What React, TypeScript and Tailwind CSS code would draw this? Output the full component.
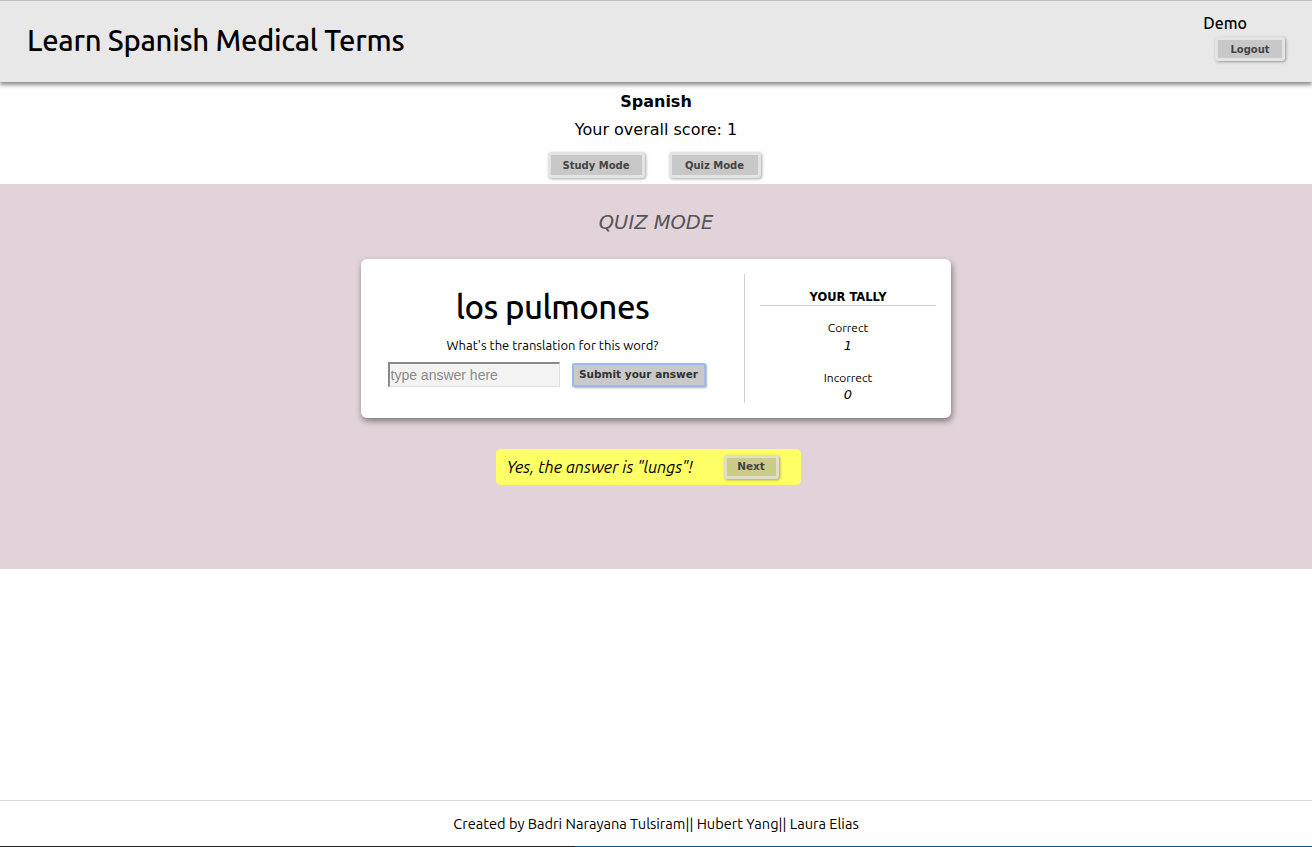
import React, { useState } from 'react';

const ubuntu = "font-['Ubuntu','Noto_Sans','Open_Sans',sans-serif]";
const verdana = "font-['DejaVu_Sans','Verdana',sans-serif]";

function GreyButton({ label, className = '' }: { label: string; className?: string }) {
  return (
    <button
      className={`${verdana} whitespace-nowrap rounded-[3px] border-[3px] border-[#e4e4e4] bg-[#c8c8c8] text-[10px] font-bold text-[#444] shadow-[1px_1px_3px_rgba(0,0,0,0.35)] ${className}`}
    >
      {label}
    </button>
  );
}

export default function App() {
  const [answer, setAnswer] = useState('');

  return (
    <div className="flex min-h-[847px] flex-col bg-white">
      <header className="flex h-[82px] items-start justify-between border-t border-[#bdbdbd] bg-[#e8e8e8] px-[27px] shadow-[0_3px_4px_rgba(0,0,0,0.45)]">
        <h1 className={`${ubuntu} mt-[22px] text-[29.3px] font-medium leading-[36px] tracking-[-0.3px] text-black`}>
          Learn Spanish Medical Terms
        </h1>
        <div className="flex flex-col items-end pt-[12px]">
          <span className={`${ubuntu} mr-[38px] text-[16px] font-medium leading-[20px] text-black`}>Demo</span>
          <GreyButton label="Logout" className="mt-[4px] h-[24px] w-[70px]" />
        </div>
      </header>

      <section className={`${verdana} flex flex-col items-center pt-[10px]`}>
        <h2 className="text-[16px] font-bold leading-[20px] text-black">Spanish</h2>
        <p className="mt-[8px] text-[16px] leading-[20px] text-black">Your overall score: 1</p>
        <div className="-ml-[4px] mt-[12px] flex gap-[24px]">
          <GreyButton label="Study Mode" className="h-[26px] w-[97px]" />
          <GreyButton label="Quiz Mode" className="h-[26px] w-[92px]" />
        </div>
      </section>

      <main className="mt-[6px] flex h-[385px] flex-col items-center bg-[#e1d3d9]">
        <h3 className={`${verdana} mt-[27px] text-[19.5px] italic leading-[24px] text-[#555]`}>QUIZ MODE</h3>

        <div className="mt-[24px] flex h-[159px] w-[590px] rounded-[6px] bg-white py-[15px] shadow-[1px_3px_6px_rgba(0,0,0,0.45)]">
          <div className="flex w-[384px] flex-col items-center border-r border-[#cfcfcf]">
            <div className={`${ubuntu} mt-[13px] text-[33px] font-medium leading-[40px] tracking-[-0.5px] text-black`}>
              los pulmones
            </div>
            <div className={`${ubuntu} mt-[10px] text-[13px] leading-[16px] text-black`}>
              What's the translation for this word?
            </div>
            <div className="mr-[12px] mt-[9px] flex items-center gap-[12px]">
              <input
                value={answer}
                onChange={e => setAnswer(e.target.value)}
                placeholder="type answer here"
                className="h-[25px] w-[172px] border-t-2 border-l-2 border-t-[#8a8a8a] border-l-[#8a8a8a] border-b border-r border-[#e0e0e0] bg-[#f3f3f3] px-[1px] font-['Liberation_Sans',Arial,sans-serif] text-[14px] text-black outline-none placeholder:text-[#8a8a8a]"
              />
              <button
                className={`${verdana} h-[24px] w-[134px] whitespace-nowrap rounded-[2px] border-[2px] border-[#9cb8f0] bg-[#c9c9c9] text-[10.5px] font-bold text-[#333] shadow-[1px_1px_2px_rgba(0,0,0,0.3)]`}
              >
                Submit your answer
              </button>
            </div>
          </div>
          <div className="flex flex-1 flex-col items-center px-[15px] pt-[16px]">
            <div className={`${verdana} w-full border-b border-[#cfcfcf] pb-[1px] text-center text-[11.5px] font-bold leading-[14px] text-black`}>
              YOUR TALLY
            </div>
            <div className={`${ubuntu} mt-[14px] text-[12px] leading-[15px] text-black`}>Correct</div>
            <div className={`${verdana} mt-[3px] text-[13px] italic leading-[16px] text-black`}>1</div>
            <div className={`${ubuntu} mt-[16px] text-[12px] leading-[15px] text-black`}>Incorrect</div>
            <div className={`${verdana} mt-[2px] text-[13px] italic leading-[16px] text-black`}>0</div>
          </div>
        </div>

        <div className="-ml-[16px] mt-[31px] flex h-[36px] w-[305px] items-center justify-between rounded-[5px] bg-[#ffff66] pl-[11px] pr-[22px]">
          <span className={`${ubuntu} text-[16.5px] italic leading-[20px] text-black`}>Yes, the answer is "lungs"!</span>
          <button
            className={`${verdana} h-[24px] w-[55px] rounded-[3px] border-[3px] border-[#e0e0c8] bg-[#cccc88] text-[10.5px] font-bold text-[#444] shadow-[1px_1px_3px_rgba(0,0,0,0.35)]`}
          >
            Next
          </button>
        </div>
      </main>

      <div className="flex-1" />

      <footer className="flex h-[46px] items-center justify-center border-t border-[#d8d8d8]">
        <p className={`${ubuntu} text-[14.6px] leading-[18px] text-black`}>
          Created by Badri Narayana Tulsiram|| Hubert Yang|| Laura Elias
        </p>
      </footer>
      <div className="flex h-[1px]">
        <div className="w-[575px] bg-[#222]" />
        <div className="flex-1 bg-[#0a4f8f]" />
      </div>
    </div>
  );
}
